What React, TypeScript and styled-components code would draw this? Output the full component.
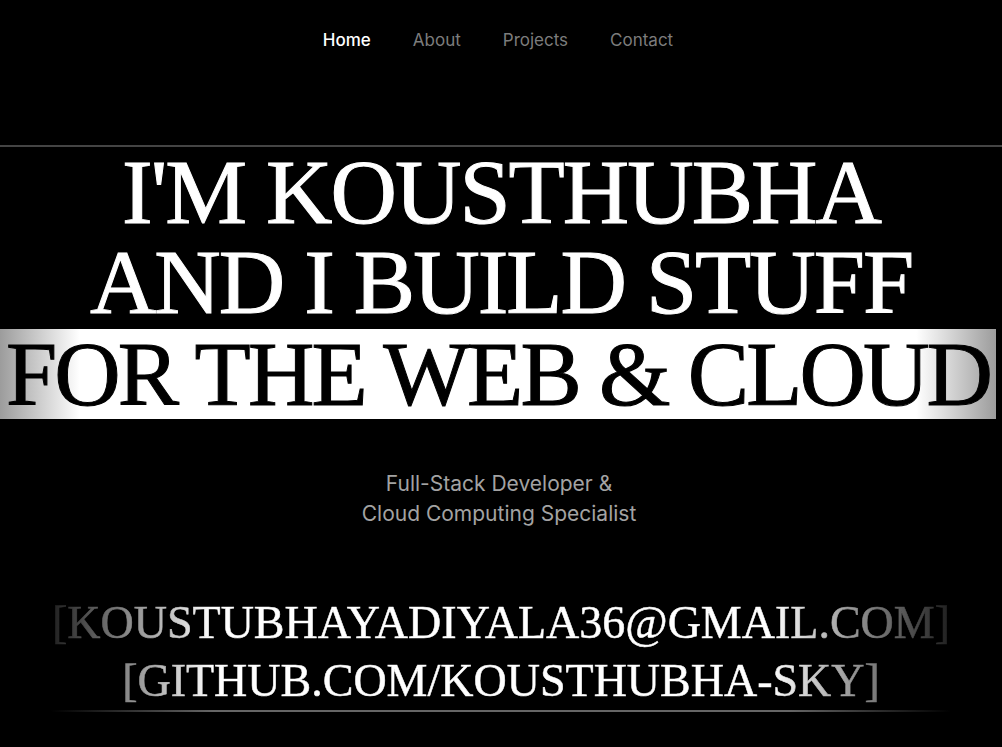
import styled, { createGlobalStyle } from "styled-components";

const GlobalStyle = createGlobalStyle`
  html, body {
    margin: 0;
    padding: 0;
    background: #000;
  }
  * {
    box-sizing: border-box;
  }
`;

const Page = styled.div`
  min-height: 747px;
  background: #000;
  color: #fff;
  overflow: hidden;
`;

const Header = styled.header`
  height: 145px;
  display: flex;
  justify-content: center;
  padding-top: 30px;
`;

const Nav = styled.nav`
  display: flex;
  gap: 42px;
  margin-left: -6px;
`;

const NavLink = styled.a<{ $active?: boolean }>`
  font-family: Inter, "Noto Sans", sans-serif;
  font-size: 17px;
  line-height: 20px;
  color: ${({ $active }) => ($active ? "#ffffff" : "#7c7c7c")};
  font-weight: ${({ $active }) => ($active ? 500 : 400)};
  text-decoration: none;
  cursor: pointer;
`;

const Hero = styled.section`
  border-top: 2px solid #444;
  display: flex;
  flex-direction: column;
  align-items: center;
`;

const Title = styled.h1`
  margin: 0;
  width: 100%;
  display: flex;
  flex-direction: column;
  align-items: center;
  font-family: "Liberation Serif", "Times New Roman", serif;
  font-weight: 400;
  font-size: 92px;
  line-height: 90px;
  letter-spacing: -2px;
  text-transform: uppercase;
`;

const TitleLine = styled.span`
  display: block;
  white-space: nowrap;
  color: #fff;
  -webkit-text-stroke: 1px #fff;
`;

const HighlightLine = styled.span`
  display: block;
  width: 996px;
  margin: 2px 6px 0 0;
  align-self: flex-start;
  white-space: nowrap;
  text-align: center;
  letter-spacing: -2.9px;
  overflow: hidden;
  color: #000;
  -webkit-text-stroke: 1px #000;
  background: linear-gradient(
    90deg,
    #9c9c9c 0%,
    #ffffff 8%,
    #ffffff 92%,
    #9c9c9c 100%
  );
`;

const Subtitle = styled.p`
  margin: 50px 4px 0 0;
  font-family: Inter, "Noto Sans", sans-serif;
  font-size: 21px;
  line-height: 30px;
  color: #a3a3a3;
  text-align: center;
`;

const Contact = styled.div`
  margin-top: 65px;
  width: 900px;
  display: flex;
  flex-direction: column;
  align-items: center;
`;

const ContactLinks = styled.div`
  width: 100%;
  display: flex;
  flex-direction: column;
  align-items: center;
  font-family: "Liberation Serif", "Times New Roman", serif;
  font-size: 46px;
  line-height: 58px;
  text-transform: uppercase;
  white-space: nowrap;
  background: linear-gradient(
    90deg,
    #1e1e1e 0%,
    #6a6a6a 6%,
    #ffffff 18%,
    #ffffff 80%,
    #6a6a6a 93%,
    #1e1e1e 100%
  );
  -webkit-background-clip: text;
  background-clip: text;
  color: transparent;
`;

const ContactLink = styled.a`
  color: transparent;
  text-decoration: none;
  -webkit-text-stroke: 0.6px transparent;
`;

const Underline = styled.div`
  width: 100%;
  height: 2px;
  background: linear-gradient(
    90deg,
    rgba(102, 102, 102, 0) 0%,
    #666 18%,
    #666 82%,
    rgba(102, 102, 102, 0) 100%
  );
`;

export default function App() {
  return (
    <Page>
      <GlobalStyle />
      <Header>
        <Nav>
          <NavLink $active>Home</NavLink>
          <NavLink>About</NavLink>
          <NavLink>Projects</NavLink>
          <NavLink>Contact</NavLink>
        </Nav>
      </Header>
      <Hero>
        <Title>
          <TitleLine>I'M KOUSTHUBHA</TitleLine>
          <TitleLine>AND I BUILD STUFF</TitleLine>
          <HighlightLine>FOR THE WEB &amp; CLOUD</HighlightLine>
        </Title>
        <Subtitle>
          Full-Stack Developer &amp;
          <br />
          Cloud Computing Specialist
        </Subtitle>
        <Contact>
          <ContactLinks>
            <ContactLink>[koustubhayadiyala36@gmail.com]</ContactLink>
            <ContactLink>[github.com/kousthubha-sky]</ContactLink>
          </ContactLinks>
          <Underline />
        </Contact>
      </Hero>
    </Page>
  );
}
